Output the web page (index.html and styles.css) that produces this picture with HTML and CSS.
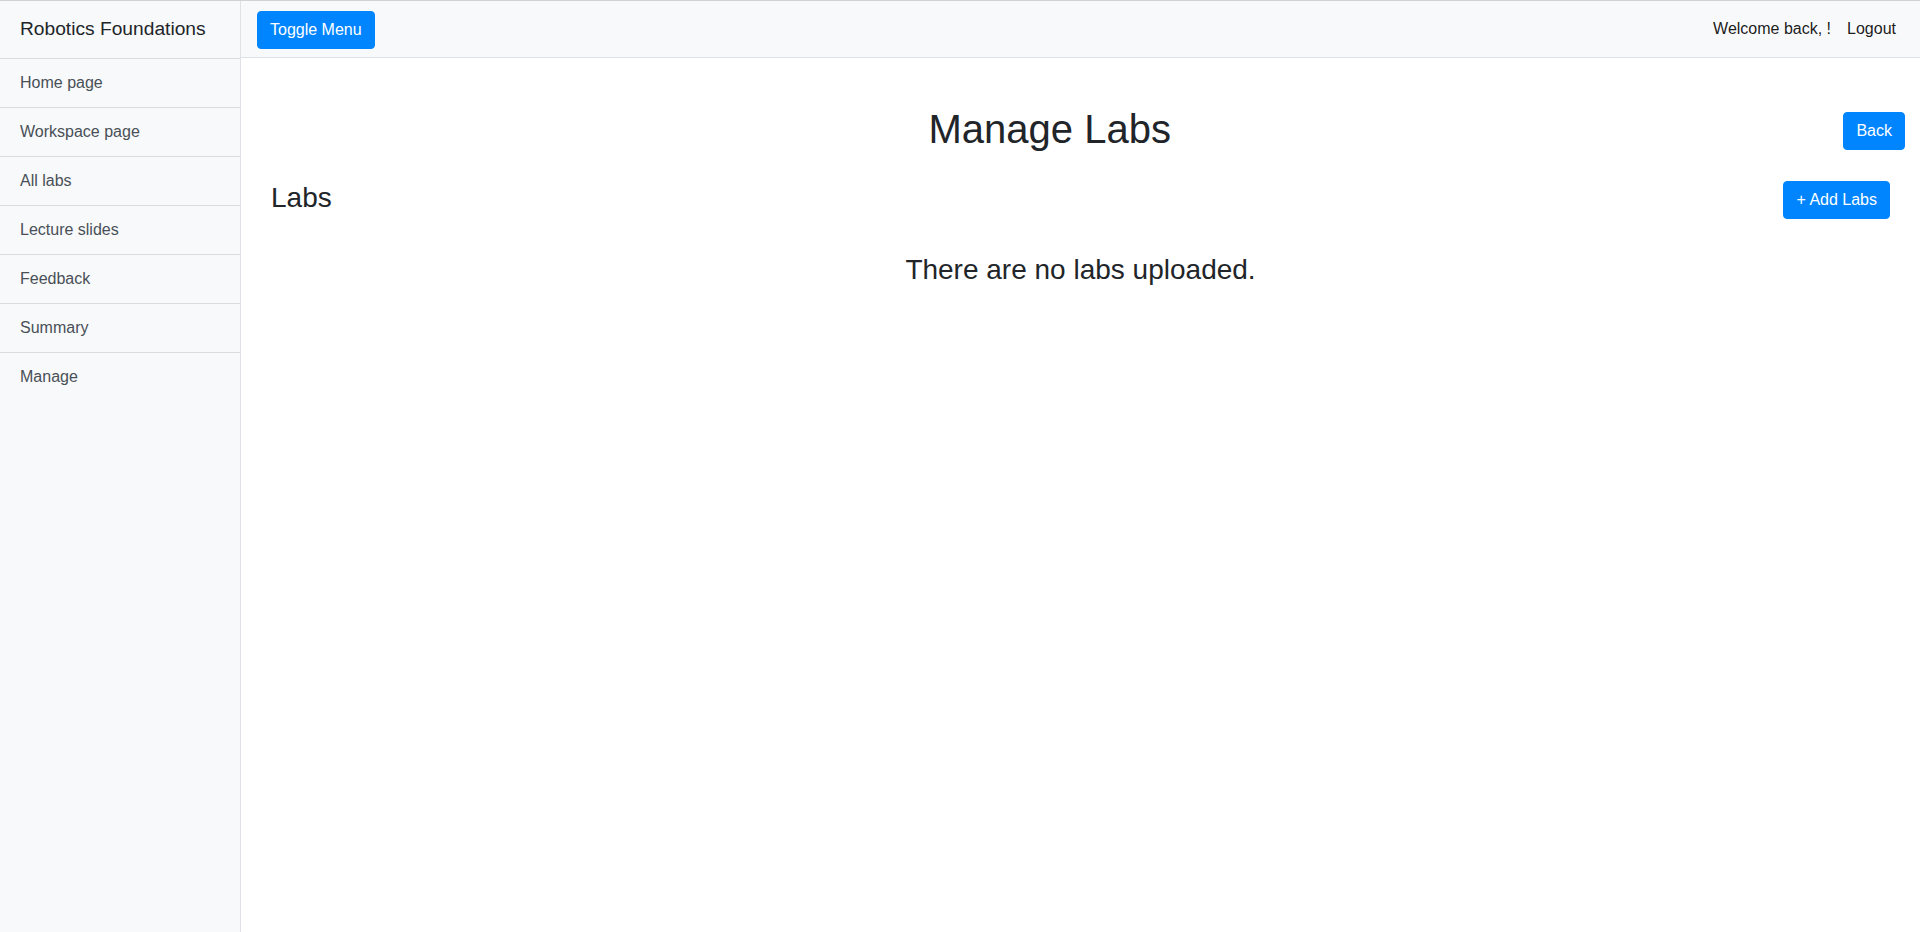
FILE: index.html
```html
<!DOCTYPE html>
<html lang="en">
<head>
<meta charset="utf-8">
<title>Manage Labs</title>
<link rel="stylesheet" href="styles.css">
</head>
<body>
<div class="wrapper">
  <aside class="sidebar">
    <div class="sidebar-heading">Robotics Foundations</div>
    <nav class="list-group">
      <a class="list-item" href="#">Home page</a>
      <a class="list-item" href="#">Workspace page</a>
      <a class="list-item" href="#">All labs</a>
      <a class="list-item" href="#">Lecture slides</a>
      <a class="list-item" href="#">Feedback</a>
      <a class="list-item" href="#">Summary</a>
      <a class="list-item" href="#">Manage</a>
    </nav>
  </aside>
  <div class="page">
    <header class="navbar">
      <button class="btn btn-primary" type="button">Toggle Menu</button>
      <ul class="nav">
        <li><span class="nav-link">Welcome back, !</span></li>
        <li><a class="nav-link" href="#">Logout</a></li>
      </ul>
    </header>
    <main class="content">
      <div class="title-row">
        <h1 class="title">Manage Labs</h1>
        <button class="btn btn-primary" type="button">Back</button>
      </div>
      <section class="labs">
        <div class="labs-header">
          <h3 class="labs-title">Labs</h3>
          <button class="btn btn-primary" type="button">+ Add Labs</button>
        </div>
        <h3 class="empty">There are no labs uploaded.</h3>
      </section>
    </main>
  </div>
</div>
</body>
</html>
```
FILE: styles.css
```css
* { box-sizing: border-box; }
html, body { height: 100%; }
body {
  margin: 0;
  border-top: 1px solid #d2d2d2;
  font-family: "Liberation Sans", Arial, Helvetica, sans-serif;
  font-size: 16px;
  line-height: 1.5;
  color: #212529;
  background: #fff;
}
.wrapper {
  display: flex;
  min-height: calc(100vh - 1px);
}
.sidebar {
  width: 241px;
  flex-shrink: 0;
  background: #f8f9fa;
  border-right: 1px solid #dee2e6;
}
.sidebar-heading {
  padding: 14px 20px;
  font-size: 19.2px;
  line-height: 1.5;
  color: #212529;
  border-bottom: 1px solid #dadbdc;
}
.list-group { display: flex; flex-direction: column; }
.list-item {
  display: block;
  padding: 12px 20px;
  color: #495057;
  text-decoration: none;
  background: #f8f9fa;
  border-bottom: 1px solid #dadbdc;
}
.list-item:last-child { border-bottom: 0; }
.page { flex: 1; min-width: 0; }
.navbar {
  display: flex;
  align-items: center;
  justify-content: space-between;
  padding: 8px 16px;
  background: #f8f9fa;
  border-bottom: 1px solid #dee2e6;
}
.navbar .btn { margin-top: 1px; }
.nav {
  display: flex;
  list-style: none;
  margin: 0;
  padding: 0;
}
.nav-link {
  display: block;
  padding: 8px;
  color: rgba(0, 0, 0, 0.9);
  text-decoration: none;
}
.btn {
  display: inline-block;
  font-family: inherit;
  font-size: 16px;
  line-height: 1.5;
  padding: 6px 12px;
  border: 1px solid transparent;
  border-radius: 4px;
  cursor: pointer;
}
.btn-primary {
  color: #fff;
  background: #0085ff;
  border-color: #0085ff;
}
.content { padding: 47px 15px 0; }
.title-row {
  display: flex;
  align-items: center;
}
.title {
  flex: 1;
  margin: 0;
  text-align: center;
  font-size: 40px;
  font-weight: 500;
  line-height: 1.2;
}
.title-row .btn { margin-top: 4px; }
.labs {
  margin-top: 28px;
  padding: 0 15px;
}
.labs-header {
  display: flex;
  justify-content: space-between;
  align-items: flex-start;
}
.labs-title, .empty {
  margin: 0 0 8px;
  font-size: 28px;
  font-weight: 500;
  line-height: 1.2;
}
.empty {
  margin-top: 30px;
  text-align: center;
}
```
